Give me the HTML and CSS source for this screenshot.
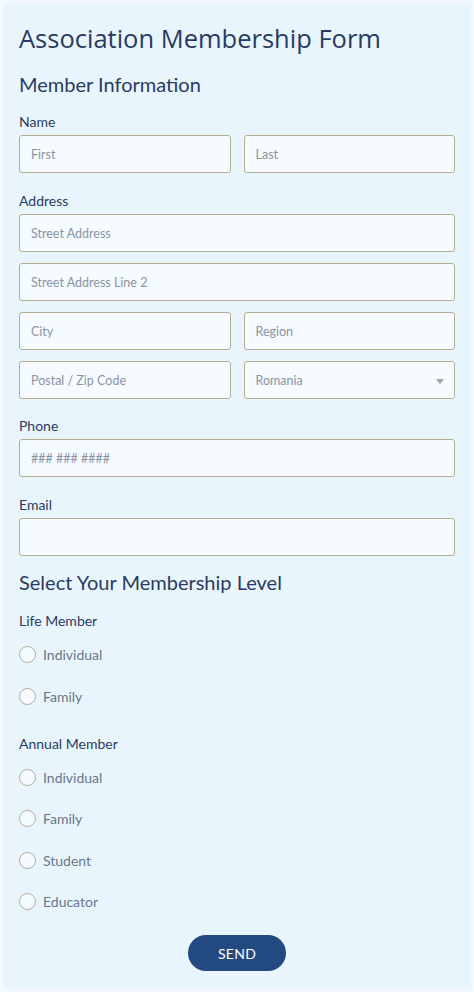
FILE: index.html
```html
<!DOCTYPE html>
<html lang="en">
<head>
<meta charset="utf-8">
<title>Association Membership Form</title>
<link rel="stylesheet" href="styles.css">
</head>
<body>
<div class="page">
  <form class="form">
    <h1 class="title">Association Membership Form</h1>
    <h2 class="section">Member Information</h2>

    <div class="field">
      <label class="label">Name</label>
      <div class="row">
        <input class="input" type="text" placeholder="First">
        <input class="input" type="text" placeholder="Last">
      </div>
    </div>

    <div class="field">
      <label class="label">Address</label>
      <div class="stack">
        <input class="input" type="text" placeholder="Street Address">
        <input class="input" type="text" placeholder="Street Address Line 2">
        <div class="row">
          <input class="input" type="text" placeholder="City">
          <input class="input" type="text" placeholder="Region">
        </div>
        <div class="row">
          <input class="input" type="text" placeholder="Postal / Zip Code">
          <div class="select">
            <span class="select-value">Romania</span>
            <svg class="select-arrow" width="8" height="5" viewBox="0 0 8 5"><path d="M0 0h8L4 5z" fill="#9aa3ad"/></svg>
          </div>
        </div>
      </div>
    </div>

    <div class="field field-phone">
      <label class="label">Phone</label>
      <input class="input" type="text" placeholder="### ### ####">
    </div>

    <div class="field">
      <label class="label">Email</label>
      <input class="input" type="email">
    </div>

    <h2 class="section section-2">Select Your Membership Level</h2>

    <div class="group">
      <div class="label">Life Member</div>
      <div class="radios">
        <label class="radio"><span class="circle"></span>Individual</label>
        <label class="radio"><span class="circle"></span>Family</label>
      </div>
    </div>

    <div class="group group-2">
      <div class="label">Annual Member</div>
      <div class="radios">
        <label class="radio"><span class="circle"></span>Individual</label>
        <label class="radio"><span class="circle"></span>Family</label>
        <label class="radio"><span class="circle"></span>Student</label>
        <label class="radio"><span class="circle"></span>Educator</label>
      </div>
    </div>

    <div class="actions">
      <button class="send" type="button">SEND</button>
    </div>
  </form>
</div>
</body>
</html>
```

FILE: styles.css
```css
* { box-sizing: border-box; }

html, body {
  margin: 0;
  padding: 0;
  background: #f3f9fd;
}

.page {
  margin: 3px;
  min-height: 986px;
  background: #e9f5fc;
}

.form {
  padding: 19px 16px 0 16px;
  font-family: "Lato", "Noto Sans", sans-serif;
  color: #2a3d60;
}

.title {
  margin: 0;
  font-family: "Open Sans", sans-serif;
  font-weight: 400;
  font-size: 25.5px;
  line-height: 32px;
  color: #283b62;
}

.section {
  margin: 17px 0 0 0;
  font-weight: 400;
  font-size: 20px;
  line-height: 26px;
  color: #283b62;
}

.section-2 { margin-top: 13px; }

.field { margin-top: 16px; display: flex; flex-direction: column; }
.field + .field { margin-top: 19px; }
.field + .field-phone { margin-top: 18px; }

.label {
  display: block;
  font-size: 14px;
  line-height: 18px;
  margin-bottom: 4px;
  color: #2a3d60;
}

.stack { display: flex; flex-direction: column; gap: 11px; }

.row {
  display: grid;
  grid-template-columns: 1fr 1fr;
  gap: 13px;
}

.input, .select {
  display: block;
  width: 100%;
  height: 38px;
  margin: 0;
  padding: 0 11px;
  border: 1px solid #b7ad8f;
  border-radius: 3px;
  background: #f5fbfe;
  font-family: "Lato", "Noto Sans", sans-serif;
  font-size: 12.5px;
  color: #2a3d60;
  outline: none;
}

.input::placeholder { color: #8b94a4; }

.select {
  position: relative;
  display: flex;
  align-items: center;
  color: #8b94a4;
}

.select-arrow {
  position: absolute;
  right: 10px;
  top: 17px;
}

.group { margin-top: 17px; }
.group-2 { margin-top: 18px; }

.group .label { margin-bottom: 4px; }

.radios { display: flex; flex-direction: column; }

.radio {
  display: flex;
  align-items: center;
  height: 41.4px;
  font-size: 14px;
  color: #687789;
}

.circle {
  width: 17px;
  height: 17px;
  border: 1px solid #b2a99a;
  border-radius: 50%;
  background: #f5fbfe;
  margin-right: 7px;
  flex: none;
}

.actions {
  display: flex;
  justify-content: center;
  margin-top: 13px;
}

.send {
  width: 98px;
  height: 36px;
  border: none;
  border-radius: 18px;
  background: #234a80;
  color: #ffffff;
  font-family: "Lato", sans-serif;
  font-size: 14px;
  letter-spacing: 0.3px;
  cursor: pointer;
}
```
